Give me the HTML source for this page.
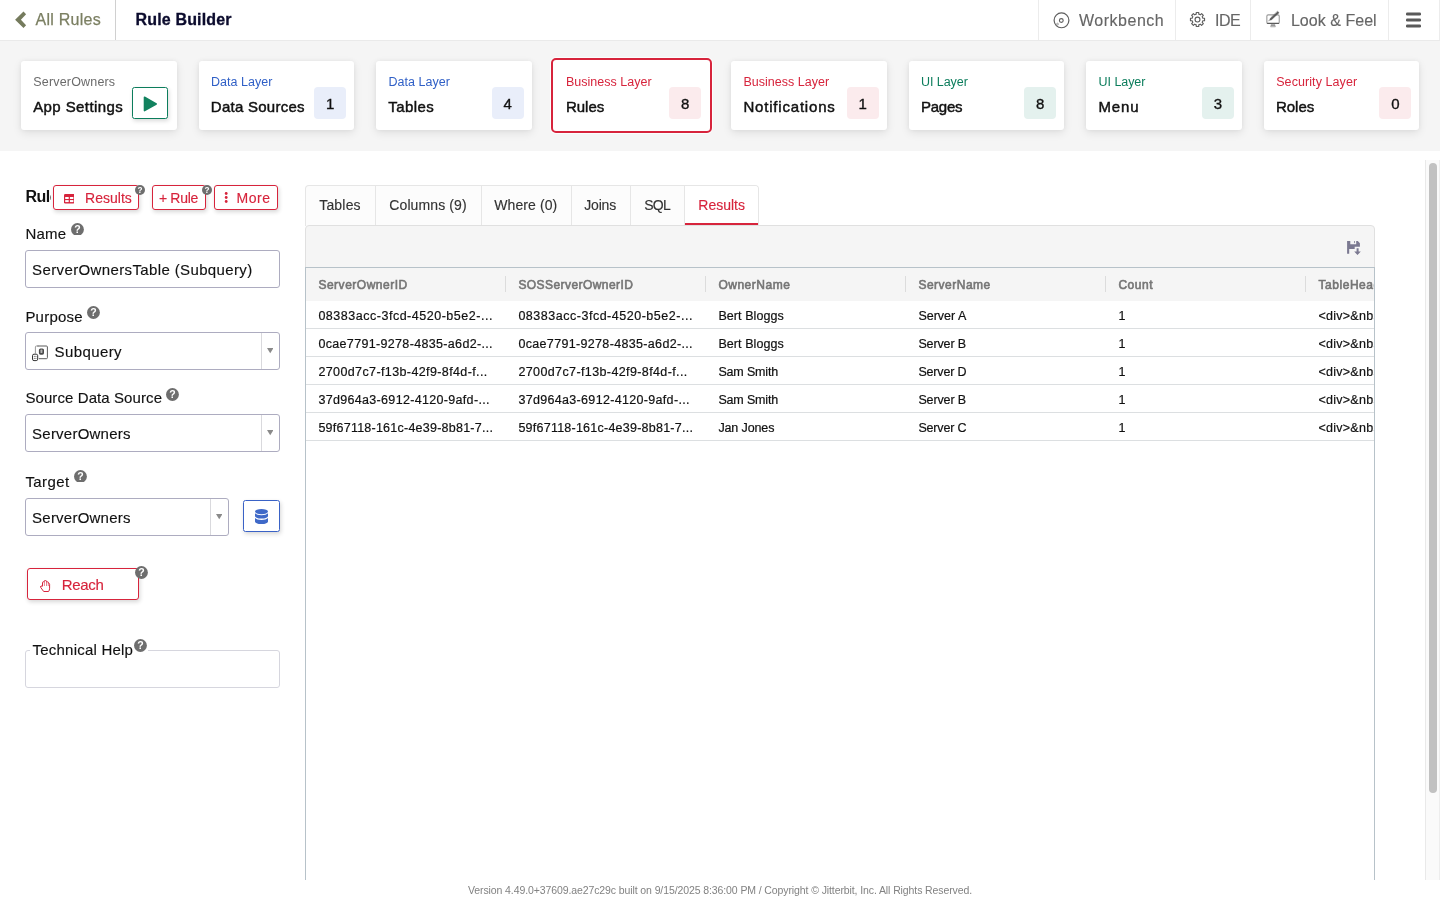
<!DOCTYPE html>
<html lang="en"><head><meta charset="utf-8"><title>Rule Builder</title>
<style>
*{box-sizing:border-box;margin:0;padding:0}
html,body{width:1440px;height:900px;overflow:hidden;background:#fff;font-family:"Liberation Sans","DejaVu Sans",sans-serif}
.abs{position:absolute}
.t{position:absolute;white-space:pre}
#root{position:absolute;left:0;top:0;width:1440px;height:900px;will-change:transform}
#hdr{position:absolute;left:0;top:0;width:1440px;height:41px;background:#fff;border-bottom:1px solid #eaeaea}
#hdr i{position:absolute;top:0;width:1px;height:40px;background:#ececec}
#band{position:absolute;left:0;top:41px;width:1440px;height:110px;background:#f5f5f5}
.card{position:absolute;top:61px;width:155.5px;height:69px;background:#fff;border-radius:3px;box-shadow:0 3px 10px rgba(0,0,0,.09),0 0 4px rgba(0,0,0,.05)}
.inp{position:absolute;height:38px;border:1px solid #adacc0;border-radius:3px;background:#fff}
.inp i{position:absolute;top:0;width:1px;height:36px;background:#d9d9dd}
</style></head><body><div id="root">
<div id="hdr"><i style="left:115px;background:#d0d0d0"></i><i style="left:1038px"></i><i style="left:1175px"></i><i style="left:1250px"></i><i style="left:1388px"></i><i style="left:1439px;background:#ececec"></i></div>
<div id="band"></div>
<div class="card" style="left:21.0px"></div>
<div class="card" style="left:198.55px"></div>
<div class="abs" style="left:314.05px;top:87px;width:32px;height:32px;border-radius:4px;background:#e9eefa"></div>
<div class="card" style="left:376.1px"></div>
<div class="abs" style="left:491.6px;top:87px;width:32px;height:32px;border-radius:4px;background:#e9eefa"></div>
<div class="abs" style="left:551.15px;top:58px;width:161px;height:75px;border:2px solid #d7243c;border-radius:5px;background:#fff;box-shadow:0 0 0 1px rgba(255,255,255,.75)"></div>
<div class="abs" style="left:669.15px;top:87px;width:32px;height:32px;border-radius:4px;background:#fbebed"></div>
<div class="card" style="left:731.2px"></div>
<div class="abs" style="left:846.7px;top:87px;width:32px;height:32px;border-radius:4px;background:#fbebed"></div>
<div class="card" style="left:908.75px"></div>
<div class="abs" style="left:1024.25px;top:87px;width:32px;height:32px;border-radius:4px;background:#e4f1ee"></div>
<div class="card" style="left:1086.3px"></div>
<div class="abs" style="left:1201.8px;top:87px;width:32px;height:32px;border-radius:4px;background:#e4f1ee"></div>
<div class="card" style="left:1263.85px"></div>
<div class="abs" style="left:1379.35px;top:87px;width:32px;height:32px;border-radius:4px;background:#fbebed"></div>
<div class="abs" style="left:132px;top:87px;width:36px;height:32px;border:1px solid #0c7d5c;border-radius:2.500px;background:#fff;box-shadow:1px 2px 4px rgba(0,0,0,.15)"></div>
<svg class="abs" style="left:142.600px;top:95.500px" width="15" height="16" viewBox="0 0 15 16"><path d="M1.500 1.300L13.200 7.950 1.500 14.600Z" fill="#12825f" stroke="#12825f" stroke-width="1.600" stroke-linejoin="round"/></svg>
<div class="abs" style="left:53px;top:185px;width:86px;height:25px;border:1px solid #d7243c;border-radius:3px;background:#fff;box-shadow:1px 2px 4px rgba(0,0,0,.16)"></div>
<div class="abs" style="left:152px;top:185px;width:54px;height:25px;border:1px solid #d7243c;border-radius:3px;background:#fff;box-shadow:1px 2px 4px rgba(0,0,0,.16)"></div>
<div class="abs" style="left:214px;top:185px;width:64px;height:25px;border:1px solid #d7243c;border-radius:3px;background:#fff;box-shadow:1px 2px 4px rgba(0,0,0,.16)"></div>
<svg class="abs" style="left:135.0px;top:185.0px" width="10" height="10" viewBox="0 0 10 10"><circle cx="5.0" cy="5.0" r="5.0" fill="#6e6e6e"/><text x="5.0" y="7.952" font-family='"Liberation Sans","DejaVu Sans",sans-serif' font-size="8.2" font-weight="700" fill="#fff" text-anchor="middle">?</text></svg>
<svg class="abs" style="left:202.0px;top:185.0px" width="10" height="10" viewBox="0 0 10 10"><circle cx="5.0" cy="5.0" r="5.0" fill="#6e6e6e"/><text x="5.0" y="7.952" font-family='"Liberation Sans","DejaVu Sans",sans-serif' font-size="8.2" font-weight="700" fill="#fff" text-anchor="middle">?</text></svg>
<svg class="abs" style="left:63.7px;top:194.3px" width="10.6" height="9.4" viewBox="0 0 10.6 9.4"><rect x="0" y="0" width="10.6" height="9.4" rx="1.2" fill="#d7243c"/><rect x="1.2" y="3" width="3.5" height="2" fill="#fff"/><rect x="5.9" y="3" width="3.5" height="2" fill="#fff"/><rect x="1.2" y="6.1" width="3.5" height="2" fill="#fff"/><rect x="5.9" y="6.1" width="3.5" height="2" fill="#fff"/></svg>
<svg class="abs" style="left:223.6px;top:192.4px" width="4.4" height="11" viewBox="0 0 4.4 11"><circle cx="2.2" cy="1.5" r="1.4" fill="#d7243c"/><circle cx="2.2" cy="5.5" r="1.4" fill="#d7243c"/><circle cx="2.2" cy="9.5" r="1.4" fill="#d7243c"/></svg>
<svg class="abs" style="left:70.85px;top:222.55px" width="12.9" height="12.9" viewBox="0 0 12.9 12.9"><circle cx="6.45" cy="6.45" r="6.45" fill="#6e6e6e"/><text x="6.45" y="10.25808" font-family='"Liberation Sans","DejaVu Sans",sans-serif' font-size="10.578" font-weight="700" fill="#fff" text-anchor="middle">?</text></svg>
<div class="inp" style="left:25px;top:250px;width:255px"></div>
<svg class="abs" style="left:87.25px;top:305.85px" width="12.9" height="12.9" viewBox="0 0 12.9 12.9"><circle cx="6.45" cy="6.45" r="6.45" fill="#6e6e6e"/><text x="6.45" y="10.25808" font-family='"Liberation Sans","DejaVu Sans",sans-serif' font-size="10.578" font-weight="700" fill="#fff" text-anchor="middle">?</text></svg>
<div class="inp" style="left:25px;top:332px;width:255px"><i style="left:235px"></i></div>
<svg class="abs" style="left:267px;top:348.400px" width="6.400" height="5.200" viewBox="0 0 6.4 4.6" preserveAspectRatio="none"><path d="M0 0H6.4L3.2 4.6Z" fill="#8a8a8a"/></svg>
<svg class="abs" style="left:166.15px;top:387.85px" width="12.9" height="12.9" viewBox="0 0 12.9 12.9"><circle cx="6.45" cy="6.45" r="6.45" fill="#6e6e6e"/><text x="6.45" y="10.25808" font-family='"Liberation Sans","DejaVu Sans",sans-serif' font-size="10.578" font-weight="700" fill="#fff" text-anchor="middle">?</text></svg>
<div class="inp" style="left:25px;top:414px;width:255px"><i style="left:235px"></i></div>
<svg class="abs" style="left:267px;top:430.400px" width="6.400" height="5.200" viewBox="0 0 6.4 4.6" preserveAspectRatio="none"><path d="M0 0H6.4L3.2 4.6Z" fill="#8a8a8a"/></svg>
<svg class="abs" style="left:73.75px;top:469.55px" width="12.9" height="12.9" viewBox="0 0 12.9 12.9"><circle cx="6.45" cy="6.45" r="6.45" fill="#6e6e6e"/><text x="6.45" y="10.25808" font-family='"Liberation Sans","DejaVu Sans",sans-serif' font-size="10.578" font-weight="700" fill="#fff" text-anchor="middle">?</text></svg>
<div class="inp" style="left:25px;top:498px;width:204px"><i style="left:184px"></i></div>
<svg class="abs" style="left:216px;top:514.400px" width="6.400" height="5.200" viewBox="0 0 6.4 4.6" preserveAspectRatio="none"><path d="M0 0H6.4L3.2 4.6Z" fill="#8a8a8a"/></svg>
<div class="abs" style="left:243px;top:500px;width:37px;height:32px;border:1px solid #3a62c6;border-radius:2.500px;background:#fff;box-shadow:1px 2px 4px rgba(0,0,0,.16)"></div>
<svg class="abs" style="left:254.600px;top:508.800px" width="13" height="15" viewBox="0 0 14 15" preserveAspectRatio="none"><g fill="#3f69c8"><ellipse cx="7" cy="2.6" rx="7" ry="2.6"/><path d="M0 4.3c1.2 1.3 4 1.9 7 1.9s5.800-.6 7-1.900v2.700c0 1.400-3.100 2.600-7 2.600s-7-1.200-7-2.600z"/><path d="M0 9c1.200 1.300 4 1.900 7 1.900s5.800-.6 7-1.900v3.400c0 1.400-3.100 2.600-7 2.600s-7-1.200-7-2.600z"/></g></svg>
<div class="abs" style="left:27px;top:568px;width:112px;height:32px;border:1px solid #d7243c;border-radius:3px;background:#fff;box-shadow:1px 2px 4px rgba(0,0,0,.16)"></div>
<svg class="abs" style="left:134.85px;top:565.75px" width="12.9" height="12.9" viewBox="0 0 12.9 12.9"><circle cx="6.45" cy="6.45" r="6.45" fill="#6e6e6e"/><text x="6.45" y="10.25808" font-family='"Liberation Sans","DejaVu Sans",sans-serif' font-size="10.578" font-weight="700" fill="#fff" text-anchor="middle">?</text></svg>
<div class="abs" style="left:25px;top:650px;width:255px;height:38px;border:1px solid #d6d6de;border-radius:3px"></div>
<div class="abs" style="left:30px;top:648px;width:118px;height:4px;background:#fff"></div>
<svg class="abs" style="left:134.05px;top:638.75px" width="12.9" height="12.9" viewBox="0 0 12.9 12.9"><circle cx="6.45" cy="6.45" r="6.45" fill="#6e6e6e"/><text x="6.45" y="10.25808" font-family='"Liberation Sans","DejaVu Sans",sans-serif' font-size="10.578" font-weight="700" fill="#fff" text-anchor="middle">?</text></svg>
<div class="abs" style="left:305px;top:185px;width:454px;height:41px;background:#fcfcfc;border:1px solid #e6e6e6;border-bottom:none;border-radius:4px 4px 0 0"></div>
<div class="abs" style="left:375px;top:186px;width:1px;height:39px;background:#e6e6e6"></div>
<div class="abs" style="left:481px;top:186px;width:1px;height:39px;background:#e6e6e6"></div>
<div class="abs" style="left:571px;top:186px;width:1px;height:39px;background:#e6e6e6"></div>
<div class="abs" style="left:630px;top:186px;width:1px;height:39px;background:#e6e6e6"></div>
<div class="abs" style="left:684px;top:186px;width:1px;height:39px;background:#e6e6e6"></div>
<div class="abs" style="left:685px;top:186px;width:73px;height:39px;background:#fff;border-bottom:2px solid #d7243c;border-radius:0 3px 0 0"></div>
<div class="abs" style="left:305px;top:225px;width:1070px;height:43px;background:#f5f5f5;border:1px solid #e0e0e0;border-radius:4px 4px 0 0"></div>
<div class="abs" style="left:305px;top:267px;width:1070px;height:613px;background:#fff;border:1px solid #b7c2c9;border-bottom:none"></div>
<div class="abs" style="left:306px;top:268px;width:1068px;height:33px;background:#f5f5f5"></div>
<div class="abs" style="left:505px;top:276px;width:1px;height:16px;background:#dcdcdc"></div>
<div class="abs" style="left:705px;top:276px;width:1px;height:16px;background:#dcdcdc"></div>
<div class="abs" style="left:905px;top:276px;width:1px;height:16px;background:#dcdcdc"></div>
<div class="abs" style="left:1105px;top:276px;width:1px;height:16px;background:#dcdcdc"></div>
<div class="abs" style="left:1305px;top:276px;width:1px;height:16px;background:#dcdcdc"></div>
<div class="abs" style="left:306px;top:328px;width:1068px;height:1px;background:#dcdfe1"></div>
<div class="abs" style="left:306px;top:356px;width:1068px;height:1px;background:#dcdfe1"></div>
<div class="abs" style="left:306px;top:384px;width:1068px;height:1px;background:#dcdfe1"></div>
<div class="abs" style="left:306px;top:412px;width:1068px;height:1px;background:#dcdfe1"></div>
<div class="abs" style="left:306px;top:440px;width:1068px;height:1px;background:#dcdfe1"></div>
<svg class="abs" style="left:1347px;top:241px" width="14" height="14" viewBox="0 0 14 14"><g fill="#7b7991"><path d="M.1.100H3.300V3.200H9.200V.1H10.800L12.900 2.200V5.700H7.700V8H2.200V12.800H.1Z"/><rect x="7.100" y="0" width=".8" height="2.100"/><path d="M9.600 7.200h2v3.400h2.200L10.500 13.900 7.200 10.600h2.400z"/></g></svg>
<div class="abs" style="left:0;top:880px;width:1440px;height:20px;background:#fff"></div>
<div class="abs" style="left:1425px;top:160px;width:15px;height:720px;background:#fafafa;border-left:1px solid #e9e9e9;border-right:1px solid #ededed"></div>
<div class="abs" style="left:1429px;top:163px;width:8px;height:630px;border-radius:4px;background:#c1c1c1"></div>
<svg class="abs" style="left:14px;top:10px" width="14" height="20" viewBox="0 0 14 20"><path d="M1.100 9.700L9.500 1.600 12.100 4.300 6.900 9.700 12.100 15.300 9.500 18Z" fill="#757b5d"/></svg>
<svg class="abs" style="left:1052.600px;top:11.500px" width="17" height="17" viewBox="0 0 17 17"><g fill="none" stroke="#5e5e5e" stroke-width="1.200"><circle cx="8.500" cy="8.350" r="7.400"/><circle cx="8.300" cy="8.500" r="1.900" stroke-width="1.100"/><circle cx="4.500" cy="12.100" r=".9" stroke-width=".8" stroke="#888"/></g></svg>
<svg class="abs" style="left:1189px;top:10.700px" width="17" height="17" viewBox="0 0 17 17"><g fill="none" stroke="#5e5e5e" stroke-width="1.150" stroke-linejoin="round"><path d="M7.27 1.46L9.73 1.46L9.78 3.15L11.37 3.81L12.61 2.65L14.35 4.39L13.19 5.63L13.85 7.22L15.54 7.27L15.54 9.73L13.85 9.78L13.19 11.37L14.35 12.61L12.61 14.35L11.37 13.19L9.78 13.85L9.73 15.54L7.27 15.54L7.22 13.85L5.63 13.19L4.39 14.35L2.65 12.61L3.81 11.37L3.15 9.78L1.46 9.73L1.46 7.27L3.15 7.22L3.81 5.63L2.65 4.39L4.39 2.65L5.63 3.81L7.22 3.15Z"/><circle cx="8.500" cy="8.500" r="2.450"/></g></svg>
<svg class="abs" style="left:1265px;top:10px" width="17" height="18" viewBox="0 0 17 18"><g fill="none" stroke-linejoin="round" stroke-linecap="round"><rect x="1.850" y="4.850" width="12.400" height="8.600" rx="1.300" stroke="#999" stroke-width="1.100"/><path d="M2.700 13.450H13.400" stroke="#5a5a5a" stroke-width="1.200"/><path d="M5.700 16.500l.5-2.100h3.600l.5 2.100z" fill="#9a9a9a" stroke="#8a8a8a" stroke-width=".5"/><path d="M12.800 1.440L14 2.760 6.600 9.660 4.600 10.300 5.400 8.340z" fill="#5a5a5a" stroke="#5a5a5a" stroke-width=".5"/><path d="M4.600 10.300L3.200 10.900" stroke="#aaa" stroke-width=".7"/></g></svg>
<svg class="abs" style="left:1406.100px;top:12px" width="15" height="16" viewBox="0 0 15 16"><g fill="#595959"><rect x="0" y=".5" width="15" height="3" rx="1.300"/><rect x="0" y="6.500" width="15" height="3" rx="1.300"/><rect x="0" y="12.500" width="15" height="3" rx="1.300"/></g></svg>
<svg class="abs" style="left:32px;top:344.5px" width="17" height="17" viewBox="0 0 17 17"><g fill="none" stroke-width="1"><path d="M3.400 8.500V2a1 1 0 0 1 1-1h2" stroke="#9a9a9a"/><path d="M5.400 1h9a1 1 0 0 1 1 1v10.700a1 1 0 0 1-1 1H6.800" stroke="#5a5a5a"/></g><rect x="6.900" y="3.500" width="5.100" height="6.200" rx="1.600" fill="#4a4a4a"/><rect x="8.500" y="4.600" width="1.900" height="3.400" rx=".6" fill="#b5b5b5"/><rect x=".5" y="9.200" width="5.200" height="6.400" rx="1.500" fill="#fff" stroke="#333" stroke-width="1"/><path d="M1.800 11.400h2.600M1.800 13.400h2.600" stroke="#555" stroke-width=".9" stroke-dasharray="1 .6"/></svg>
<svg class="abs" style="left:40px;top:579.5px" width="11" height="13" viewBox="0 0 11 13"><g fill="none" stroke="#d7243c" stroke-linejoin="round" stroke-linecap="round"><path stroke-width="1" d="M.9 6.300Q1.600 5.800 2.500 6.200V2.600Q2.500 1.800 3.300 1.800H4.200V1.200Q4.200.6 5 .6H5.700Q6.500.6 6.500 1.300V1.800H7.600Q8.400 1.800 8.400 2.600V3.100Q9.600 3.200 9.600 4.300V8.200Q9.600 10.200 8.600 11.500H3.700L.8 7.600Q.2 6.800.9 6.300Z"/><path stroke-width=".8" opacity=".75" d="M4.400 2V5.600M6.500 2V5.600M8.300 3.200V5.600"/></g></svg>
<span class="t" style="left:35.5px;top:12px;font-size:16px;line-height:16px;color:#7b7f62;letter-spacing:0.262px;-webkit-text-stroke:0.25px #7b7f62;">All Rules</span>
<span class="t" style="left:135.5px;top:12px;font-size:16px;line-height:16px;color:#0b0b2d;font-weight:700;letter-spacing:0.164px;-webkit-text-stroke:0.3px #0b0b2d;">Rule Builder</span>
<span class="t" style="left:1078.9px;top:13px;font-size:16px;line-height:16px;color:#666;letter-spacing:0.529px;-webkit-text-stroke:0.14px #666;">Workbench</span>
<span class="t" style="left:1215.0px;top:13px;font-size:16px;line-height:16px;color:#666;letter-spacing:-0.557px;-webkit-text-stroke:0.14px #666;">IDE</span>
<span class="t" style="left:1290.9px;top:13px;font-size:16px;line-height:16px;color:#666;letter-spacing:0.037px;-webkit-text-stroke:0.14px #666;">Look &amp; Feel</span>
<span class="t" style="left:33.3px;top:76px;font-size:12.5px;line-height:12.5px;color:#6b6b6b;letter-spacing:0.176px;">ServerOwners</span>
<span class="t" style="left:33.2px;top:99px;font-size:15px;line-height:15px;color:#111;letter-spacing:0.411px;-webkit-text-stroke:0.45px #111;">App Settings</span>
<span class="t" style="left:210.9px;top:76px;font-size:12.5px;line-height:12.5px;color:#2f5fc6;letter-spacing:0.044px;">Data Layer</span>
<span class="t" style="left:210.8px;top:99px;font-size:15px;line-height:15px;color:#111;letter-spacing:0.259px;-webkit-text-stroke:0.45px #111;">Data Sources</span>
<span class="t" style="left:314.1px;top:96px;font-size:15px;line-height:15px;color:#111;-webkit-text-stroke:0.35px #111;width:32px;text-align:center;">1</span>
<span class="t" style="left:388.4px;top:76px;font-size:12.5px;line-height:12.5px;color:#2f5fc6;letter-spacing:0.044px;">Data Layer</span>
<span class="t" style="left:388.3px;top:99px;font-size:15px;line-height:15px;color:#111;letter-spacing:0.423px;-webkit-text-stroke:0.45px #111;">Tables</span>
<span class="t" style="left:491.6px;top:96px;font-size:15px;line-height:15px;color:#111;-webkit-text-stroke:0.35px #111;width:32px;text-align:center;">4</span>
<span class="t" style="left:566.0px;top:76px;font-size:12.5px;line-height:12.5px;color:#d7243c;letter-spacing:0.009px;">Business Layer</span>
<span class="t" style="left:565.9px;top:99px;font-size:15px;line-height:15px;color:#111;letter-spacing:0.028px;-webkit-text-stroke:0.45px #111;">Rules</span>
<span class="t" style="left:669.2px;top:96px;font-size:15px;line-height:15px;color:#111;-webkit-text-stroke:0.35px #111;width:32px;text-align:center;">8</span>
<span class="t" style="left:743.5px;top:76px;font-size:12.5px;line-height:12.5px;color:#d7243c;letter-spacing:0.009px;">Business Layer</span>
<span class="t" style="left:743.4px;top:99px;font-size:15px;line-height:15px;color:#111;letter-spacing:0.811px;-webkit-text-stroke:0.45px #111;">Notifications</span>
<span class="t" style="left:846.7px;top:96px;font-size:15px;line-height:15px;color:#111;-webkit-text-stroke:0.35px #111;width:32px;text-align:center;">1</span>
<span class="t" style="left:921.0px;top:76px;font-size:12.5px;line-height:12.5px;color:#0c7d5c;letter-spacing:-0.062px;">UI Layer</span>
<span class="t" style="left:921.0px;top:99px;font-size:15px;line-height:15px;color:#111;letter-spacing:-0.259px;-webkit-text-stroke:0.45px #111;">Pages</span>
<span class="t" style="left:1024.2px;top:96px;font-size:15px;line-height:15px;color:#111;-webkit-text-stroke:0.35px #111;width:32px;text-align:center;">8</span>
<span class="t" style="left:1098.6px;top:76px;font-size:12.5px;line-height:12.5px;color:#0c7d5c;letter-spacing:-0.062px;">UI Layer</span>
<span class="t" style="left:1098.5px;top:99px;font-size:15px;line-height:15px;color:#111;letter-spacing:0.867px;-webkit-text-stroke:0.45px #111;">Menu</span>
<span class="t" style="left:1201.8px;top:96px;font-size:15px;line-height:15px;color:#111;-webkit-text-stroke:0.35px #111;width:32px;text-align:center;">3</span>
<span class="t" style="left:1276.2px;top:76px;font-size:12.5px;line-height:12.5px;color:#d7243c;letter-spacing:0.078px;">Security Layer</span>
<span class="t" style="left:1276.1px;top:99px;font-size:15px;line-height:15px;color:#111;letter-spacing:-0.072px;-webkit-text-stroke:0.45px #111;">Roles</span>
<span class="t" style="left:1379.4px;top:96px;font-size:15px;line-height:15px;color:#111;-webkit-text-stroke:0.35px #111;width:32px;text-align:center;">0</span>
<span class="t" style="left:25.4px;top:189px;font-size:16px;line-height:16px;color:#111;font-weight:700;letter-spacing:-0.46px;max-width:25.200px;overflow:hidden;">Rule</span>
<span class="t" style="left:85.0px;top:191px;font-size:14px;line-height:14px;color:#d7243c;letter-spacing:0.03px;-webkit-text-stroke:0.14px #d7243c;">Results</span>
<span class="t" style="left:158.9px;top:191px;font-size:14px;line-height:14px;color:#d7243c;letter-spacing:-0.293px;-webkit-text-stroke:0.14px #d7243c;">+ Rule</span>
<span class="t" style="left:236.6px;top:191px;font-size:14px;line-height:14px;color:#d7243c;letter-spacing:0.523px;-webkit-text-stroke:0.14px #d7243c;">More</span>
<span class="t" style="left:25.4px;top:226px;font-size:15px;line-height:15px;color:#111;letter-spacing:0.246px;-webkit-text-stroke:0.14px #111;">Name</span>
<span class="t" style="left:32.1px;top:262px;font-size:15px;line-height:15px;color:#111;letter-spacing:0.372px;-webkit-text-stroke:0.14px #111;">ServerOwnersTable (Subquery)</span>
<span class="t" style="left:25.4px;top:309px;font-size:15px;line-height:15px;color:#111;letter-spacing:0.218px;-webkit-text-stroke:0.14px #111;">Purpose</span>
<span class="t" style="left:54.5px;top:344px;font-size:15px;line-height:15px;color:#111;letter-spacing:0.41px;-webkit-text-stroke:0.14px #111;">Subquery</span>
<span class="t" style="left:25.4px;top:390px;font-size:15px;line-height:15px;color:#111;letter-spacing:0.09px;-webkit-text-stroke:0.14px #111;">Source Data Source</span>
<span class="t" style="left:32.1px;top:426px;font-size:15px;line-height:15px;color:#111;letter-spacing:0.228px;-webkit-text-stroke:0.14px #111;">ServerOwners</span>
<span class="t" style="left:25.4px;top:474px;font-size:15px;line-height:15px;color:#111;letter-spacing:0.433px;-webkit-text-stroke:0.14px #111;">Target</span>
<span class="t" style="left:32.1px;top:510px;font-size:15px;line-height:15px;color:#111;letter-spacing:0.228px;-webkit-text-stroke:0.14px #111;">ServerOwners</span>
<span class="t" style="left:61.7px;top:577px;font-size:15px;line-height:15px;color:#d7243c;letter-spacing:-0.312px;-webkit-text-stroke:0.14px #d7243c;">Reach</span>
<span class="t" style="left:32.5px;top:642px;font-size:15px;line-height:15px;color:#111;letter-spacing:0.224px;-webkit-text-stroke:0.14px #111;">Technical Help</span>
<span class="t" style="left:319.2px;top:198px;font-size:14px;line-height:14px;color:#333;letter-spacing:0.189px;-webkit-text-stroke:0.14px #333;">Tables</span>
<span class="t" style="left:389.3px;top:198px;font-size:14px;line-height:14px;color:#333;letter-spacing:0.105px;-webkit-text-stroke:0.14px #333;">Columns (9)</span>
<span class="t" style="left:494.3px;top:198px;font-size:14px;line-height:14px;color:#333;letter-spacing:0.085px;-webkit-text-stroke:0.14px #333;">Where (0)</span>
<span class="t" style="left:584.3px;top:198px;font-size:14px;line-height:14px;color:#333;letter-spacing:-0.198px;-webkit-text-stroke:0.14px #333;">Joins</span>
<span class="t" style="left:644.3px;top:198px;font-size:14px;line-height:14px;color:#333;letter-spacing:-0.772px;-webkit-text-stroke:0.14px #333;">SQL</span>
<span class="t" style="left:698.3px;top:198px;font-size:14px;line-height:14px;color:#d7243c;letter-spacing:0.002px;-webkit-text-stroke:0.14px #d7243c;">Results</span>
<span class="t" style="left:318.4px;top:279px;font-size:12px;line-height:12px;color:#757575;letter-spacing:0.516px;-webkit-text-stroke:0.6px #757575;">ServerOwnerID</span>
<span class="t" style="left:518.4px;top:279px;font-size:12px;line-height:12px;color:#757575;letter-spacing:0.436px;-webkit-text-stroke:0.6px #757575;">SOSServerOwnerID</span>
<span class="t" style="left:718.4px;top:279px;font-size:12px;line-height:12px;color:#757575;letter-spacing:0.516px;-webkit-text-stroke:0.6px #757575;">OwnerName</span>
<span class="t" style="left:918.4px;top:279px;font-size:12px;line-height:12px;color:#757575;letter-spacing:0.504px;-webkit-text-stroke:0.6px #757575;">ServerName</span>
<span class="t" style="left:1118.4px;top:279px;font-size:12px;line-height:12px;color:#757575;letter-spacing:0.514px;-webkit-text-stroke:0.6px #757575;">Count</span>
<span class="t" style="left:1318.4px;top:279px;font-size:12px;line-height:12px;color:#757575;letter-spacing:0.562px;-webkit-text-stroke:0.6px #757575;max-width:55.600px;overflow:hidden;">TableHeader</span>
<span class="t" style="left:318.4px;top:310px;font-size:12.5px;line-height:12.5px;color:#111;letter-spacing:0.517px;-webkit-text-stroke:0.2px #111;">08383acc-3fcd-4520-b5e2-...</span>
<span class="t" style="left:518.4px;top:310px;font-size:12.5px;line-height:12.5px;color:#111;letter-spacing:0.517px;-webkit-text-stroke:0.2px #111;">08383acc-3fcd-4520-b5e2-...</span>
<span class="t" style="left:718.4px;top:310px;font-size:12.5px;line-height:12.5px;color:#111;letter-spacing:0.07px;-webkit-text-stroke:0.2px #111;">Bert Bloggs</span>
<span class="t" style="left:918.4px;top:310px;font-size:12.5px;line-height:12.5px;color:#111;letter-spacing:-0.005px;-webkit-text-stroke:0.2px #111;">Server A</span>
<span class="t" style="left:1118.4px;top:310px;font-size:12.5px;line-height:12.5px;color:#111;-webkit-text-stroke:0.2px #111;">1</span>
<span class="t" style="left:1318.4px;top:310px;font-size:12.5px;line-height:12.5px;color:#111;letter-spacing:0.271px;-webkit-text-stroke:0.2px #111;max-width:55.600px;overflow:hidden;">&lt;div&gt;&amp;nbsp;&lt;/div&gt;</span>
<span class="t" style="left:318.4px;top:338px;font-size:12.5px;line-height:12.5px;color:#111;letter-spacing:0.337px;-webkit-text-stroke:0.2px #111;">0cae7791-9278-4835-a6d2-...</span>
<span class="t" style="left:518.4px;top:338px;font-size:12.5px;line-height:12.5px;color:#111;letter-spacing:0.337px;-webkit-text-stroke:0.2px #111;">0cae7791-9278-4835-a6d2-...</span>
<span class="t" style="left:718.4px;top:338px;font-size:12.5px;line-height:12.5px;color:#111;letter-spacing:0.07px;-webkit-text-stroke:0.2px #111;">Bert Bloggs</span>
<span class="t" style="left:918.4px;top:338px;font-size:12.5px;line-height:12.5px;color:#111;letter-spacing:-0.13px;-webkit-text-stroke:0.2px #111;">Server B</span>
<span class="t" style="left:1118.4px;top:338px;font-size:12.5px;line-height:12.5px;color:#111;-webkit-text-stroke:0.2px #111;">1</span>
<span class="t" style="left:1318.4px;top:338px;font-size:12.5px;line-height:12.5px;color:#111;letter-spacing:0.271px;-webkit-text-stroke:0.2px #111;max-width:55.600px;overflow:hidden;">&lt;div&gt;&amp;nbsp;&lt;/div&gt;</span>
<span class="t" style="left:318.4px;top:366px;font-size:12.5px;line-height:12.5px;color:#111;letter-spacing:0.387px;-webkit-text-stroke:0.2px #111;">2700d7c7-f13b-42f9-8f4d-f...</span>
<span class="t" style="left:518.4px;top:366px;font-size:12.5px;line-height:12.5px;color:#111;letter-spacing:0.387px;-webkit-text-stroke:0.2px #111;">2700d7c7-f13b-42f9-8f4d-f...</span>
<span class="t" style="left:718.4px;top:366px;font-size:12.5px;line-height:12.5px;color:#111;letter-spacing:-0.171px;-webkit-text-stroke:0.2px #111;">Sam Smith</span>
<span class="t" style="left:918.4px;top:366px;font-size:12.5px;line-height:12.5px;color:#111;letter-spacing:-0.179px;-webkit-text-stroke:0.2px #111;">Server D</span>
<span class="t" style="left:1118.4px;top:366px;font-size:12.5px;line-height:12.5px;color:#111;-webkit-text-stroke:0.2px #111;">1</span>
<span class="t" style="left:1318.4px;top:366px;font-size:12.5px;line-height:12.5px;color:#111;letter-spacing:0.271px;-webkit-text-stroke:0.2px #111;max-width:55.600px;overflow:hidden;">&lt;div&gt;&amp;nbsp;&lt;/div&gt;</span>
<span class="t" style="left:318.4px;top:394px;font-size:12.5px;line-height:12.5px;color:#111;letter-spacing:0.324px;-webkit-text-stroke:0.2px #111;">37d964a3-6912-4120-9afd-...</span>
<span class="t" style="left:518.4px;top:394px;font-size:12.5px;line-height:12.5px;color:#111;letter-spacing:0.324px;-webkit-text-stroke:0.2px #111;">37d964a3-6912-4120-9afd-...</span>
<span class="t" style="left:718.4px;top:394px;font-size:12.5px;line-height:12.5px;color:#111;letter-spacing:-0.171px;-webkit-text-stroke:0.2px #111;">Sam Smith</span>
<span class="t" style="left:918.4px;top:394px;font-size:12.5px;line-height:12.5px;color:#111;letter-spacing:-0.13px;-webkit-text-stroke:0.2px #111;">Server B</span>
<span class="t" style="left:1118.4px;top:394px;font-size:12.5px;line-height:12.5px;color:#111;-webkit-text-stroke:0.2px #111;">1</span>
<span class="t" style="left:1318.4px;top:394px;font-size:12.5px;line-height:12.5px;color:#111;letter-spacing:0.271px;-webkit-text-stroke:0.2px #111;max-width:55.600px;overflow:hidden;">&lt;div&gt;&amp;nbsp;&lt;/div&gt;</span>
<span class="t" style="left:318.4px;top:422px;font-size:12.5px;line-height:12.5px;color:#111;letter-spacing:0.241px;-webkit-text-stroke:0.2px #111;">59f67118-161c-4e39-8b81-7...</span>
<span class="t" style="left:518.4px;top:422px;font-size:12.5px;line-height:12.5px;color:#111;letter-spacing:0.241px;-webkit-text-stroke:0.2px #111;">59f67118-161c-4e39-8b81-7...</span>
<span class="t" style="left:718.4px;top:422px;font-size:12.5px;line-height:12.5px;color:#111;letter-spacing:-0.12px;-webkit-text-stroke:0.2px #111;">Jan Jones</span>
<span class="t" style="left:918.4px;top:422px;font-size:12.5px;line-height:12.5px;color:#111;letter-spacing:-0.179px;-webkit-text-stroke:0.2px #111;">Server C</span>
<span class="t" style="left:1118.4px;top:422px;font-size:12.5px;line-height:12.5px;color:#111;-webkit-text-stroke:0.2px #111;">1</span>
<span class="t" style="left:1318.4px;top:422px;font-size:12.5px;line-height:12.5px;color:#111;letter-spacing:0.271px;-webkit-text-stroke:0.2px #111;max-width:55.600px;overflow:hidden;">&lt;div&gt;&amp;nbsp;&lt;/div&gt;</span>
<span class="t" style="left:468.0px;top:885px;font-size:10.5px;line-height:10.5px;color:#828282;letter-spacing:-0.102px;">Version 4.49.0+37609.ae27c29c built on 9/15/2025 8:36:00 PM / Copyright © Jitterbit, Inc. All Rights Reserved.</span>
</div></body></html>
